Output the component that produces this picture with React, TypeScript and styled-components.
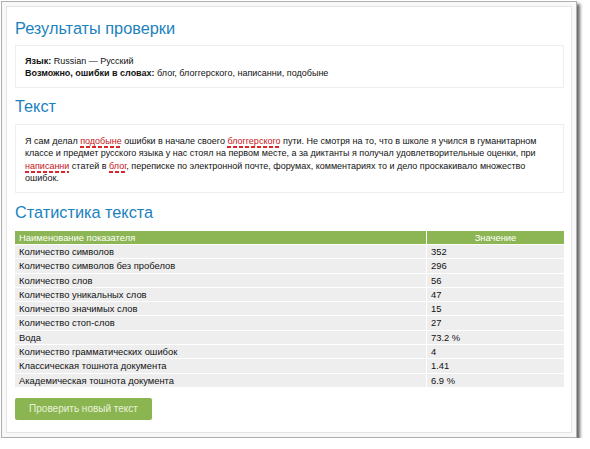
import React from "react";
import styled, { createGlobalStyle } from "styled-components";

const Global = createGlobalStyle`
  html, body { margin: 0; padding: 0; background: #ffffff; }
  body { font-family: "Liberation Sans", Arial, sans-serif; color: #111; }
`;

const Frame = styled.div`
  margin: 1px 0 0 1px;
  width: 576px;
  height: 437px;
  box-sizing: border-box;
  border: 1px solid #b0b0b0;
  background: #f8f8f8;
  padding: 4px;
  box-shadow: 3px 3px 3px rgba(0, 0, 0, 0.6);
`;

const Inner = styled.div`
  box-sizing: border-box;
  height: 100%;
  border: 1px solid #e4e4e4;
  background: #ffffff;
  padding: 0 7px 0 8px;
  display: flex;
  flex-direction: column;
`;

const Title = styled.h2<{ $mt: number }>`
  margin: ${(p) => p.$mt}px 0 0 0;
  height: 24px;
  line-height: 24px;
  font-size: 16.3px;
  font-weight: 400;
  color: #1a82be;
  font-family: "Liberation Sans", Arial, sans-serif;
  white-space: nowrap;
`;

const Box = styled.div<{ $mt: number; $pad: string }>`
  margin-top: ${(p) => p.$mt}px;
  border: 1px solid #eeeeee;
  padding: ${(p) => p.$pad};
  font-size: 9px;
  color: #111;
`;

const Line = styled.div`
  line-height: 12px;
  white-space: nowrap;
`;

const Para = styled.div`
  line-height: 12.4px;
  white-space: nowrap;
`;

const Err = styled.span`
  color: #c4141b;
  background-image: linear-gradient(to right, #d9252b 60%, transparent 60%);
  background-size: 6px 2px;
  background-repeat: repeat-x;
  background-position: 0 100%;
  padding-bottom: 2px;
`;

const Table = styled.div`
  margin-top: 7px;
  display: flex;
  flex-direction: column;
  font-size: 9.4px;
  color: #111;
`;

const Row = styled.div<{ $head?: boolean }>`
  display: grid;
  grid-template-columns: 411px 1px 1fr;
  height: 14.3px;
  box-sizing: border-box;
  border-bottom: 1px solid #ffffff;
  background: ${(p) => (p.$head ? "#8cb553" : "#eeeeee")};
  color: ${(p) => (p.$head ? "#ffffff" : "#111")};
  line-height: 13.3px;
`;

const Cell = styled.div<{ $center?: boolean }>`
  padding: 0 4px;
  text-align: ${(p) => (p.$center ? "center" : "left")};
  white-space: nowrap;
  overflow: hidden;
`;

const Sep = styled.div`
  background: #ffffff;
`;

const Button = styled.button`
  margin-top: 10px;
  width: 137px;
  height: 22px;
  border: none;
  border-radius: 2px;
  background: #8bb550;
  color: #e9f2dc;
  font-family: "Liberation Sans", Arial, sans-serif;
  font-size: 10px;
  padding: 0;
  cursor: pointer;
`;

const rows: [string, string][] = [
  ["Количество символов", "352"],
  ["Количество символов без пробелов", "296"],
  ["Количество слов", "56"],
  ["Количество уникальных слов", "47"],
  ["Количество значимых слов", "15"],
  ["Количество стоп-слов", "27"],
  ["Вода", "73.2 %"],
  ["Количество грамматических ошибок", "4"],
  ["Классическая тошнота документа", "1.41"],
  ["Академическая тошнота документа", "6.9 %"],
];

export default function App() {
  return (
    <>
      <Global />
      <Frame>
        <Inner>
          <Title $mt={9}>Результаты проверки</Title>
          <Box $mt={5} $pad="9px 9px 8px">
            <Line>
              <b>Язык:</b> Russian — Русский
            </Line>
            <Line>
              <b>Возможно, ошибки в словах:</b> блог, блоггерского, написанни, подобыне
            </Line>
          </Box>
          <Title $mt={6}>Текст</Title>
          <Box $mt={6} $pad="10px 9px 7px">
            <Para>
              Я сам делал <Err>подобыне</Err> ошибки в начале своего <Err>блоггерского</Err> пути. Не смотря на то, что в школе я учился в гуманитарном
            </Para>
            <Para>
              классе и предмет русского языка у нас стоял на первом месте, а за диктанты я получал удовлетворительные оценки, при
            </Para>
            <Para>
              <Err>написанни</Err> статей в <Err>блог</Err>, переписке по электронной почте, форумах, комментариях то и дело проскакивало множество
            </Para>
            <Para>ошибок.</Para>
          </Box>
          <Title $mt={7}>Статистика текста</Title>
          <Table>
            <Row $head>
              <Cell>Наименование показателя</Cell>
              <Sep />
              <Cell $center>Значение</Cell>
            </Row>
            {rows.map(([k, v]) => (
              <Row key={k}>
                <Cell>{k}</Cell>
                <Sep />
                <Cell>{v}</Cell>
              </Row>
            ))}
          </Table>
          <div>
            <Button>Проверить новый текст</Button>
          </div>
        </Inner>
      </Frame>
    </>
  );
}
